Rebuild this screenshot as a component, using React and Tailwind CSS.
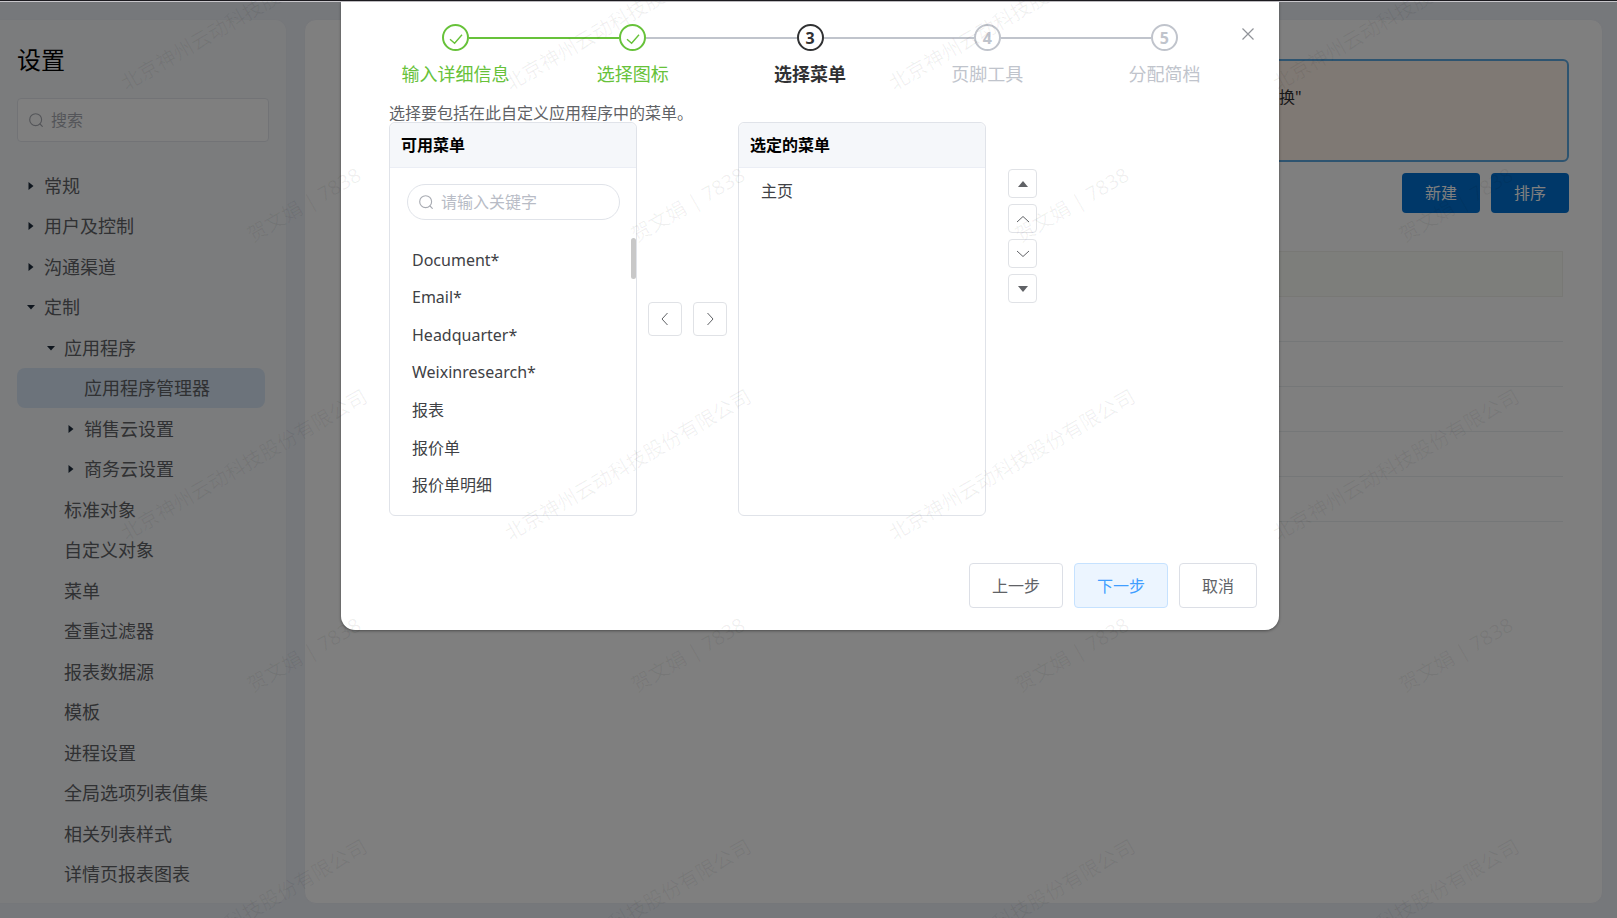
import React, { useState } from 'react';
import clsx from 'clsx';

const MENU_ITEMS = [
  { label: '常规', level: 0, arrow: 'right' },
  { label: '用户及控制', level: 0, arrow: 'right' },
  { label: '沟通渠道', level: 0, arrow: 'right' },
  { label: '定制', level: 0, arrow: 'down' },
  { label: '应用程序', level: 1, arrow: 'down' },
  { label: '应用程序管理器', level: 2, active: true },
  { label: '销售云设置', level: 2, arrow: 'right' },
  { label: '商务云设置', level: 2, arrow: 'right' },
  { label: '标准对象', level: 1 },
  { label: '自定义对象', level: 1 },
  { label: '菜单', level: 1 },
  { label: '查重过滤器', level: 1 },
  { label: '报表数据源', level: 1 },
  { label: '模板', level: 1 },
  { label: '进程设置', level: 1 },
  { label: '全局选项列表值集', level: 1 },
  { label: '相关列表样式', level: 1 },
  { label: '详情页报表图表', level: 1 },
];

const LEVEL_PADDING = ['pl-[7px]', 'pl-[27px]', 'pl-[47px]'];

const STEPS = [
  { label: '输入详细信息', status: 'done' },
  { label: '选择图标', status: 'done' },
  { label: '选择菜单', status: 'current' },
  { label: '页脚工具', status: 'wait' },
  { label: '分配简档', status: 'wait' },
];

const STEP_STYLES = {
  done: 'border-[#67c23a] text-[#67c23a]',
  current: 'border-[#303133] text-[#303133]',
  wait: 'border-[#c0c4cc] text-[#c0c4cc]',
};

const AVAILABLE_MENUS = [
  'Document*',
  'Email*',
  'Headquarter*',
  'Weixinresearch*',
  '报表',
  '报价单',
  '报价单明细',
];

const TABLE_ROWS = [1, 2, 3, 4, 5];

const WATERMARK_COLUMNS = [0, 1, 2, 3, 4];
const WATERMARK_ROWS = [0, 1, 2];

function SearchIcon() {
  return (
    <svg
      viewBox="0 0 16 16"
      className="size-3.5 shrink-0"
      fill="none"
      stroke="currentColor"
      strokeWidth="1.3"
      aria-hidden="true"
    >
      <circle cx="7.6" cy="7.6" r="6.8" />
      <path d="M12.6 12.6l2.6 2.6" strokeLinecap="round" />
    </svg>
  );
}

function Chevron({ d }) {
  return (
    <svg
      viewBox="0 0 14 14"
      className="size-3.5"
      fill="none"
      stroke="currentColor"
      strokeWidth="1"
      aria-hidden="true"
    >
      <path d={d} />
    </svg>
  );
}

function Triangle({ d }) {
  return (
    <svg
      viewBox="0 0 14 14"
      className="size-3.5 shrink-0"
      fill="currentColor"
      aria-hidden="true"
    >
      <path d={d} />
    </svg>
  );
}

function Sidebar() {
  const [keyword, setKeyword] = useState('');

  return (
    <aside className="flex w-[287px] shrink-0 flex-col rounded-r-xl border-y border-r border-[#ebeef5] bg-[#f7f9fb] pt-[21px] pb-[9px] pl-[17px]">
      <h1 className="text-2xl leading-[38px] text-black">设置</h1>
      <label className="mt-[19px] mr-[17px] flex h-11 items-center gap-2 rounded border border-[#e4e7ed] bg-white px-[11px] text-[#a8abb2]">
        <SearchIcon />
        <input
          type="text"
          aria-label="搜索"
          placeholder="搜索"
          value={keyword}
          onChange={(e) => setKeyword(e.target.value)}
          className="w-full min-w-0 bg-transparent text-base text-[#606266] outline-none placeholder:text-[#a8abb2]"
        />
      </label>

      <nav className="mt-6 mr-[21px] flex flex-1 flex-col justify-between">
        {MENU_ITEMS.map((item) => (
          <a
            key={item.label}
            href="#"
            className={clsx(
              'flex h-10 items-center gap-1.5 rounded-lg text-lg text-[#606266]',
              LEVEL_PADDING[item.level],
              item.active && 'bg-[#d9e7f6]'
            )}
          >
            <span className="flex w-3.5 text-[#1f2d3d]">
              {item.arrow === 'right' && <Triangle d="M4.5 3v8L9.5 7z" />}
              {item.arrow === 'down' && <Triangle d="M3 5h8L7 9.5z" />}
            </span>
            {item.label}
          </a>
        ))}
      </nav>
    </aside>
  );
}

function AppManager() {
  return (
    <main className="min-w-0 flex-1 rounded-xl border border-[#ebeef5] bg-white pt-[39px] pr-[33px] pl-[37px]">
      <div className="h-[103px] rounded-md border-2 border-[#5da8e0] bg-[#fff2e8] pt-6 pl-[935px] text-base leading-6 text-[#303133]">
        换"
      </div>
      <div className="mt-[11px] flex justify-end gap-[11px]">
        {['新建', '排序'].map((label) => (
          <button
            key={label}
            type="button"
            className="h-10 w-[78px] rounded bg-[#0070d2] text-base text-white"
          >
            {label}
          </button>
        ))}
      </div>
      <div className="mt-[38px] px-1.5">
        <table className="w-full border-collapse">
          <thead>
            <tr className="h-[45px] border border-[#f0f0ea] bg-[#fbfcf7]">
              <th />
            </tr>
          </thead>
          <tbody>
            {TABLE_ROWS.map((row) => (
              <tr key={row} className="h-[45px] border-b border-[#ebeef0]">
                <td />
              </tr>
            ))}
          </tbody>
        </table>
      </div>
    </main>
  );
}

function Steps() {
  return (
    <ol className="flex px-[26px]">
      {STEPS.map((step, index) => (
        <li key={step.label} className="flex flex-1 flex-col items-center">
          <div className="flex w-full items-center">
            <span
              className={clsx(
                'h-0.5 flex-1',
                index === 0 && 'invisible',
                index === 1 ? 'bg-[#67c23a]' : 'bg-[#c0c4cc]'
              )}
            />
            <span
              className={clsx(
                'flex size-[27px] items-center justify-center rounded-full border-2 text-base font-bold',
                STEP_STYLES[step.status]
              )}
            >
              {step.status === 'done' ? (
                <svg
                  viewBox="0 0 16 16"
                  className="size-4"
                  fill="none"
                  stroke="currentColor"
                  strokeWidth="1.4"
                  aria-hidden="true"
                >
                  <path d="M2 9.2l4.6 4L14 4.8" />
                </svg>
              ) : (
                index + 1
              )}
            </span>
            <span
              className={clsx(
                'h-0.5 flex-1',
                index === STEPS.length - 1 && 'invisible',
                index === 0 ? 'bg-[#67c23a]' : 'bg-[#c0c4cc]'
              )}
            />
          </div>
          <span
            className={clsx(
              'mt-[9px] text-lg leading-7',
              STEP_STYLES[step.status],
              step.status === 'current' && 'font-bold'
            )}
          >
            {step.label}
          </span>
        </li>
      ))}
    </ol>
  );
}

function TransferPanel({ title, children }) {
  return (
    <section className="relative flex h-[394px] w-[248px] flex-col rounded-md border border-[#e0e3e9]">
      <h2 className="h-[45px] rounded-t-md border-b border-[#ebeef5] bg-[#f5f7fa] pl-[11px] text-base leading-[44px] font-bold text-black">
        {title}
      </h2>
      {children}
    </section>
  );
}

function IconButton({ label, className, children }) {
  return (
    <button
      type="button"
      aria-label={label}
      className={clsx(
        'flex items-center justify-center rounded border border-[#e0e2e6] bg-white text-[#606266]',
        className
      )}
    >
      {children}
    </button>
  );
}

function MenuDialog() {
  const [keyword, setKeyword] = useState('');

  return (
    <div
      role="dialog"
      aria-label="选择菜单"
      className="relative w-[938px] max-w-full rounded-b-[14px] bg-white pt-[22px] pb-[22px] shadow-[0_1px_3px_rgba(0,0,0,0.4)]"
    >
      <button
        type="button"
        aria-label="关闭"
        className="absolute top-[25px] right-6 text-[#909399]"
      >
        <svg
          viewBox="0 0 14 14"
          className="size-3.5"
          fill="none"
          stroke="currentColor"
          strokeWidth="1.2"
          aria-hidden="true"
        >
          <path d="M1.5 1.5l11 11M12.5 1.5l-11 11" />
        </svg>
      </button>

      <Steps />

      <p className="mt-[17px] pl-12 text-base leading-[17px] text-[#606266]">
        选择要包括在此自定义应用程序中的菜单。
      </p>
      <div className="flex items-start pl-12">
        <TransferPanel title="可用菜单">
          <label className="mt-4 mr-4 ml-[17px] flex h-9 items-center gap-2 rounded-full border border-[#e0e3e9] px-[11px] text-[#a8abb2]">
            <SearchIcon />
            <input
              type="text"
              aria-label="请输入关键字"
              placeholder="请输入关键字"
              value={keyword}
              onChange={(e) => setKeyword(e.target.value)}
              className="w-full min-w-0 bg-transparent text-base text-[#606266] outline-none placeholder:text-[#b8bcc6]"
            />
          </label>
          <ul className="mt-[21px] mb-[11px] grid flex-1 auto-rows-fr pl-[22px]">
            {AVAILABLE_MENUS.map((menu) => (
              <li key={menu} className="flex items-center text-base text-[#404145]">
                {menu}
              </li>
            ))}
          </ul>
          <span className="absolute top-[115px] right-0 h-[41px] w-[5px] rounded-full bg-[#c8c8c8]" />
        </TransferPanel>

        <div className="flex gap-[11px] self-center px-[11px]">
          <IconButton label="移除" className="size-[34px]">
            <Chevron d="M9.5 1L4 7l5.5 6" />
          </IconButton>
          <IconButton label="添加" className="size-[34px]">
            <Chevron d="M4.5 1L10 7l-5.5 6" />
          </IconButton>
        </div>

        <TransferPanel title="选定的菜单">
          <ul className="pt-1 pl-[22px]">
            <li className="text-base leading-[38px] text-[#404145]">主页</li>
          </ul>
        </TransferPanel>

        <div className="mt-[47px] ml-[22px] flex flex-col gap-1.5">
          <IconButton label="置顶" className="size-[29px]">
            <Triangle d="M2 10h10L7 4z" />
          </IconButton>
          <IconButton label="上移" className="size-[29px]">
            <Chevron d="M1 10l6-5.5 6 5.5" />
          </IconButton>
          <IconButton label="下移" className="size-[29px]">
            <Chevron d="M1 4l6 5.5L13 4" />
          </IconButton>
          <IconButton label="置底" className="size-[29px]">
            <Triangle d="M2 4h10l-5 6z" />
          </IconButton>
        </div>
      </div>

      <div className="mt-[47px] flex justify-end gap-[11px] pr-[22px]">
        <button
          type="button"
          className="h-[45px] w-[94px] rounded border border-[#dcdfe6] bg-white text-base text-[#606266]"
        >
          上一步
        </button>
        <button
          type="button"
          className="h-[45px] w-[94px] rounded border border-[#c6e2ff] bg-[#ecf5ff] text-base text-[#409eff]"
        >
          下一步
        </button>
        <button
          type="button"
          className="h-[45px] w-[78px] rounded border border-[#dcdfe6] bg-white text-base text-[#606266]"
        >
          取消
        </button>
      </div>
    </div>
  );
}

function Watermark() {
  return (
    <div
      className="pointer-events-none absolute inset-0 overflow-hidden text-xl whitespace-nowrap text-black/6"
      aria-hidden="true"
    >
      {WATERMARK_ROWS.map((row) =>
        WATERMARK_COLUMNS.map((column) => (
          <React.Fragment key={`${row}-${column}`}>
            <span
              className="absolute -translate-x-1/2 -translate-y-1/2 -rotate-30"
              style={{ left: 244 + column * 384, top: 14 + row * 450 }}
            >
              北京神州云动科技股份有限公司
            </span>
            <span
              className="absolute -translate-x-1/2 -translate-y-1/2 -rotate-30"
              style={{ left: 304 + column * 384, top: 204 + row * 450 }}
            >
              贺文娟 | 7838
            </span>
          </React.Fragment>
        ))
      )}
    </div>
  );
}

function App() {
  return (
    <div className="relative flex min-h-screen flex-col overflow-hidden border-t border-[#1b1a1f] bg-[#edf0f6] font-['Noto_Sans','Noto_Sans_CJK_SC',sans-serif]">
      <div className="h-px bg-[#c8c6cb]" />
      <div className="flex flex-1 gap-[17px] pt-[17px] pr-3.5 pb-3.5">
        <Sidebar />
        <AppManager />
      </div>
      <div className="absolute inset-x-0 top-px bottom-0 flex items-start justify-center bg-black/50 pl-[3px]">
        <MenuDialog />
      </div>
      <Watermark />
    </div>
  );
}

export default App;
